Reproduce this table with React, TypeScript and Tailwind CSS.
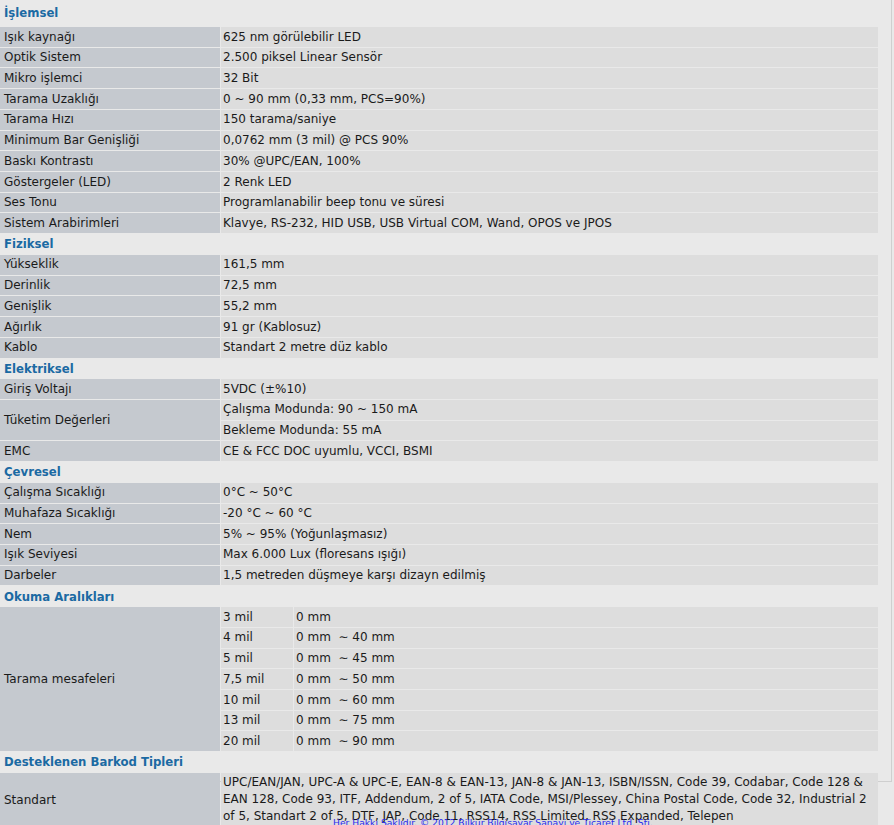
import React from 'react';

type Row = [string, string | string[]];
type Section = { title: string; rows: Row[] };

const sections: Section[] = [
  {
    title: 'İşlemsel',
    rows: [
      ['Işık kaynağı', '625 nm görülebilir LED'],
      ['Optik Sistem', '2.500 piksel Linear Sensör'],
      ['Mikro işlemci', '32 Bit'],
      ['Tarama Uzaklığı', '0 ~ 90 mm (0,33 mm, PCS=90%)'],
      ['Tarama Hızı', '150 tarama/saniye'],
      ['Minimum Bar Genişliği', '0,0762 mm (3 mil) @ PCS 90%'],
      ['Baskı Kontrastı', '30% @UPC/EAN, 100%'],
      ['Göstergeler (LED)', '2 Renk LED'],
      ['Ses Tonu', 'Programlanabilir beep tonu ve süresi'],
      ['Sistem Arabirimleri', 'Klavye, RS-232, HID USB, USB Virtual COM, Wand, OPOS ve JPOS'],
    ],
  },
  {
    title: 'Fiziksel',
    rows: [
      ['Yükseklik', '161,5 mm'],
      ['Derinlik', '72,5 mm'],
      ['Genişlik', '55,2 mm'],
      ['Ağırlık', '91 gr (Kablosuz)'],
      ['Kablo', 'Standart 2 metre düz kablo'],
    ],
  },
  {
    title: 'Elektriksel',
    rows: [
      ['Giriş Voltajı', '5VDC (±%10)'],
      ['Tüketim Değerleri', ['Çalışma Modunda: 90 ~ 150 mA', 'Bekleme Modunda: 55 mA']],
      ['EMC', 'CE & FCC DOC uyumlu, VCCI, BSMI'],
    ],
  },
  {
    title: 'Çevresel',
    rows: [
      ['Çalışma Sıcaklığı', '0°C ~ 50°C'],
      ['Muhafaza Sıcaklığı', '-20 °C ~ 60 °C'],
      ['Nem', '5% ~ 95% (Yoğunlaşmasız)'],
      ['Işık Seviyesi', 'Max 6.000 Lux (floresans ışığı)'],
      ['Darbeler', '1,5 metreden düşmeye karşı dizayn edilmiş'],
    ],
  },
];

const ranges: [string, string][] = [
  ['3 mil', '0 mm'],
  ['4 mil', '0 mm\u00a0 ∼ 40 mm'],
  ['5 mil', '0 mm\u00a0 ∼ 45 mm'],
  ['7,5 mil', '0 mm\u00a0 ∼ 50 mm'],
  ['10 mil', '0 mm\u00a0 ∼ 60 mm'],
  ['13 mil', '0 mm\u00a0 ∼ 75 mm'],
  ['20 mil', '0 mm\u00a0 ∼ 90 mm'],
];

const barcodes =
  'UPC/EAN/JAN, UPC-A & UPC-E, EAN-8 & EAN-13, JAN-8 & JAN-13, ISBN/ISSN, Code 39, Codabar, Code 128 & EAN 128, Code 93, ITF, Addendum, 2 of 5, IATA Code, MSI/Plessey, China Postal Code, Code 32, Industrial 2 of 5, Standart 2 of 5, DTF, JAP, Code 11, RSS14, RSS Limited, RSS Expanded, Telepen';

const label = 'bg-[#c5c9cf] pl-[4px] py-[1.5px] leading-[16.72px] flex items-center';
const value = 'bg-[#dddddd] pl-[2px] py-[1.5px] leading-[16.72px]';

const Title = ({ text, first }: { text: string; first?: boolean }) => (
  <div
    className={`col-span-2 flex items-center pl-[4px] font-bold text-[13px] text-[#1b6aa3] ${first ? 'h-[26px]' : 'h-[19.72px]'}`}
    style={{ fontFamily: '"DejaVu Sans Condensed", "DejaVu Sans", sans-serif' }}
  >
    {text}
  </div>
);

export default function App() {
  return (
    <div className="min-h-[825px] bg-[#e9e9e9] text-[12px] text-[#1a1a1a]" style={{ fontFamily: '"DejaVu Sans", Verdana, sans-serif' }}>
      <div className="w-[892px] h-[782px] border-r border-b border-[#cfcfcf]">
        <div className="grid w-[878px] grid-cols-[220px_657px] gap-px">
          {sections.map((s, si) => (
            <React.Fragment key={s.title}>
              <Title text={s.title} first={si === 0} />
              {s.rows.map(([k, v]) =>
                Array.isArray(v) ? (
                  <React.Fragment key={k}>
                    <div className={`${label} row-span-2`}>{k}</div>
                    <div className={value}>{v[0]}</div>
                    <div className={value}>{v[1]}</div>
                  </React.Fragment>
                ) : (
                  <React.Fragment key={k}>
                    <div className={label}>{k}</div>
                    <div className={value}>{v}</div>
                  </React.Fragment>
                ),
              )}
            </React.Fragment>
          ))}
          <Title text="Okuma Aralıkları" />
          <div className={`${label} row-span-7`}>Tarama mesafeleri</div>
          {ranges.map(([a, b]) => (
            <div key={a} className="flex gap-px">
              <div className={`${value} w-[72px] shrink-0`}>{a}</div>
              <div className={`${value} flex-1 whitespace-pre`}>{b}</div>
            </div>
          ))}
          <Title text="Desteklenen Barkod Tipleri" />
          <div className={label}>Standart</div>
          <div className={`${value} pr-[10px] leading-[17px]`}>{barcodes}</div>
        </div>
      </div>
      <div
        className="pl-[333px] pt-[35px] text-[9.2px] leading-[11px] text-[#2a2aee]"
        style={{ fontFamily: '"DejaVu Sans", Verdana, sans-serif' }}
      >
        Her Hakkı Saklıdır. © 2012 Bilkur Bilgisayar Sanayi ve Ticaret Ltd. Şti.
      </div>
    </div>
  );
}
